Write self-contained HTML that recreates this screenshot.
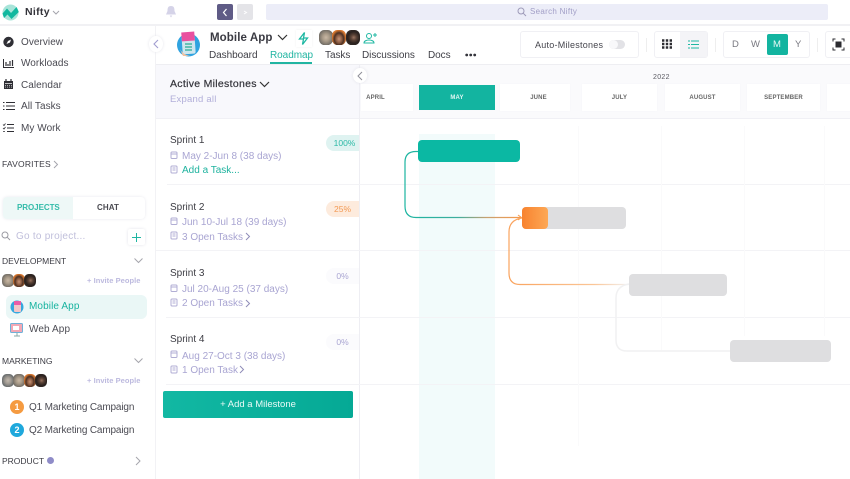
<!DOCTYPE html>
<html><head><meta charset="utf-8"><style>
html,body{margin:0;padding:0;background:#fff}
#p{position:relative;width:850px;height:479px;overflow:hidden;background:#fff;font-family:"Liberation Sans",sans-serif;color:#3c3c44;filter:blur(.35px)}
.a,.t{position:absolute}
.t{white-space:nowrap;line-height:14px}
svg{position:absolute;overflow:visible}
.nav{font-size:10px;color:#4a4a52;letter-spacing:.05px;left:21px}
.sec{font-size:8.5px;left:2px;color:#3c3c44}
.mon{font-size:6px;font-weight:700;color:#666;letter-spacing:.15px;text-align:center}
.cell{position:absolute;top:84px;height:27px;background:#fff;box-shadow:0 0 2px #f6f6f9}
.sp{font-size:10px;left:170px;color:#3d3d44}
.d{font-size:10px;left:182px;color:#a9a5d2}
.pc{font-size:8.5px;text-align:center}
.tab{font-size:10px;top:49px;color:#3f3f46;letter-spacing:-.05px}
.bx{position:absolute;background:#fff;border:1px solid #f0f0f4;border-radius:3px;box-sizing:border-box}
.av{position:absolute;border-radius:38%;box-sizing:border-box}
.f1{background:radial-gradient(ellipse at 50% 50%,#c9b8a4 0,#a89a88 35%,#6f6a63 75%,#8d857c 100%)}
.f2{background:radial-gradient(ellipse at 50% 60%,#c79478 0,#8a5a40 30%,#4a3024 48%,#d9782f 70%)}
.f3{background:radial-gradient(ellipse at 55% 50%,#9a7460 0,#5a4236 25%,#2a211e 55%,#3c3530 100%)}
.f0{background:radial-gradient(ellipse at 50% 50%,#c3b9ae 0,#a09a92 35%,#626769 75%,#9b9fa0 100%)}
.ch{font-size:10px;left:29px;color:#4c4c54;letter-spacing:-.15px}
</style></head><body><div id="p">

<!-- top bar -->
<div class="a" style="left:0;top:24px;width:850px;height:2px;background:#f1f1f4"></div>
<svg style="left:2px;top:4px" width="17" height="17" viewBox="0 0 17 17"><circle cx="8.500" cy="8.500" r="8" fill="#a8e4d9"/><path d="M0.500 9.500 L5 4.500 L9 9 L14.500 3 L16.800 8 L9.500 15 L5.500 10.500 L2 14Z" fill="#10b89f"/></svg>
<div class="t" style="left:25px;top:5px;font-size:10.5px;font-weight:700;color:#33333a;letter-spacing:.3px">Nifty</div>
<svg style="left:52px;top:10px" width="8" height="5"><path d="M1 1 L4 4 L7 1" fill="none" stroke="#a5a5ad" stroke-width="1"/></svg>
<svg style="left:165px;top:5px" width="12" height="13" viewBox="0 0 12 13"><path d="M6 1 C3 1 2.500 3 2.500 6 L1 9.500 H11 L9.500 6 C9.500 3 9 1 6 1Z M4.700 10.500 H7.300 L6 12.500Z" fill="#d5d3e8"/></svg>
<div class="a" style="left:217px;top:4px;width:16px;height:16px;background:#5f5b86;border-radius:2px"></div>
<svg style="left:222px;top:8px" width="6" height="9"><path d="M4.500 1 L1.500 4.500 L4.500 8" fill="none" stroke="#fff" stroke-width="1.200"/></svg>
<div class="a" style="left:237px;top:4px;width:16px;height:16px;background:#e4e4e8;border-radius:2px"></div>
<svg style="left:243px;top:10px" width="5" height="5"><path d="M1 1 L3.500 2.500 L1 4" fill="none" stroke="#fff" stroke-width="1"/></svg>
<div class="a" style="left:266px;top:4px;width:562px;height:16px;background:#ecedf8;border-radius:2px"></div>
<svg style="left:517px;top:7px" width="10" height="10"><circle cx="4" cy="4" r="3" fill="none" stroke="#9d9ab8" stroke-width="1"/><path d="M6.300 6.300 L9 9" stroke="#9d9ab8" stroke-width="1"/></svg>
<div class="t" style="left:530px;top:5px;font-size:8px;color:#a19ec6;letter-spacing:.3px">Search Nifty</div>

<!-- sidebar -->
<div class="a" style="left:155px;top:26px;width:1px;height:453px;background:#f2f2f5"></div>
<svg style="left:3px;top:36px" width="12" height="12"><circle cx="5.500" cy="6" r="5.200" fill="#2f2f35"/><path d="M3.500 8 L5 5 L8 3.500 L7 6.500Z" fill="#fff"/></svg>
<div class="t nav" style="top:36px">Overview</div>
<svg style="left:3px;top:58px" width="12" height="11"><path d="M.5 1 V9.500 H11" fill="none" stroke="#2f2f35" stroke-width="1"/><path d="M3 4 V8 M5 6 V8 M7 3 V8 M9.500 2 V8" stroke="#2f2f35" stroke-width="1.200"/></svg>
<div class="t nav" style="top:57px">Workloads</div>
<svg style="left:4px;top:79px" width="10" height="11"><path d="M0 2 H9 V10 H0Z" fill="#2f2f35"/><path d="M2 0 V3 M7 0 V3" stroke="#2f2f35" stroke-width="1.200"/><path d="M1 4.500 H8" stroke="#fff" stroke-width=".7"/><path d="M1.500 6 V9 M3.500 6 V9 M5.500 6 V9 M7.500 6 V9" stroke="#fff" stroke-width=".6" stroke-dasharray="1 .6"/></svg>
<div class="t nav" style="top:79px">Calendar</div>
<svg style="left:3px;top:101px" width="12" height="10"><path d="M3 1.500 H12 M3 5 H12 M3 8.500 H12" stroke="#2f2f35" stroke-width="1"/><path d="M0 1.500 H1.500 M0 5 H1.500 M0 8.500 H1.500" stroke="#2f2f35" stroke-width="1"/></svg>
<div class="t nav" style="top:100px">All Tasks</div>
<svg style="left:3px;top:123px" width="12" height="10"><path d="M4 1.500 H11 M4 5 H11 M4 8.500 H11" stroke="#2f2f35" stroke-width="1"/><path d="M0 1.500 L1 2.500 L2.500 .5 M0 5 L1 6 L2.500 4 M0 8.500 H2" fill="none" stroke="#2f2f35" stroke-width=".8"/></svg>
<div class="t nav" style="top:122px">My Work</div>
<div class="t sec" style="top:157px;letter-spacing:.2px">FAVORITES</div>
<svg style="left:53px;top:160px" width="6" height="9"><path d="M1 1 L4.500 4.500 L1 8" fill="none" stroke="#a5a5ad" stroke-width="1"/></svg>

<div class="a" style="left:3px;top:197px;width:142px;height:22px;background:#fff;border-radius:4px;box-shadow:0 0 3px #e9e9ef"></div>
<div class="a" style="left:3px;top:197px;width:70px;height:22px;background:#eef8f7;border-radius:4px 0 0 4px"></div>
<div class="t" style="left:17px;top:201px;font-size:8px;font-weight:700;color:#33bba9;letter-spacing:-.05px">PROJECTS</div>
<div class="t" style="left:97px;top:201px;font-size:8px;font-weight:700;color:#4b4b52;letter-spacing:.1px">CHAT</div>
<svg style="left:1px;top:231px" width="10" height="10"><circle cx="4" cy="4" r="3" fill="none" stroke="#9a9aa2" stroke-width="1"/><path d="M6.300 6.300 L9 9" stroke="#9a9aa2" stroke-width="1"/></svg>
<div class="t" style="left:16px;top:230px;font-size:10px;color:#c0bfdb;letter-spacing:.25px">Go to project...</div>
<div class="a" style="left:128px;top:229px;width:17px;height:16px;background:#fff;box-shadow:0 0 3px #e4e4ea;border-radius:2px"></div>
<svg style="left:132px;top:233px" width="9" height="9"><path d="M4.500 0 V9 M0 4.500 H9" stroke="#20b6a2" stroke-width="1"/></svg>

<div class="t sec" style="top:254px">DEVELOPMENT</div>
<svg style="left:134px;top:258px" width="9" height="6"><path d="M.5 .5 L4.500 4.500 L8.500 .5" fill="none" stroke="#a5a5ad" stroke-width="1"/></svg>
<div class="av f1" style="left:2px;top:274px;width:12px;height:13px"></div>
<div class="av f2" style="left:13px;top:274px;width:12px;height:13px"></div>
<div class="av f3" style="left:24px;top:274px;width:12px;height:13px"></div>
<div class="t" style="left:87px;top:274px;font-size:7.500px;font-weight:700;color:#bdbadf;letter-spacing:.05px">+ Invite People</div>
<div class="a" style="left:6px;top:295px;width:141px;height:24px;background:#eaf7f6;border-radius:6px"></div>
<svg style="left:10px;top:300px" width="14" height="14"><circle cx="7" cy="7" r="6.500" fill="#34a8de"/><rect x="4" y="2" width="7" height="10" rx="1" fill="#f4c6c8"/><rect x="4" y="1" width="7" height="4" fill="#e95ca7"/></svg>
<div class="t" style="left:29px;top:300px;font-size:10px;color:#17b39f;letter-spacing:.1px">Mobile App</div>
<svg style="left:10px;top:323px" width="14" height="14"><rect x=".5" y=".5" width="12" height="9" rx="1" fill="#f3a8b5" stroke="#6fb1d8"/><rect x="3" y="3" width="6" height="4" fill="#fff"/><path d="M7 10 V12.500 M4 13 H10" stroke="#8aa" stroke-width="1"/></svg>
<div class="t" style="left:29px;top:323px;font-size:10px;color:#4c4c54;letter-spacing:.1px">Web App</div>

<div class="t sec" style="top:354px">MARKETING</div>
<svg style="left:134px;top:358px" width="9" height="6"><path d="M.5 .5 L4.500 4.500 L8.500 .5" fill="none" stroke="#a5a5ad" stroke-width="1"/></svg>
<div class="av f0" style="left:2px;top:374px;width:12px;height:13px"></div>
<div class="av f1" style="left:13px;top:374px;width:12px;height:13px"></div>
<div class="av f2" style="left:24px;top:374px;width:12px;height:13px"></div>
<div class="av f3" style="left:35px;top:374px;width:12px;height:13px"></div>
<div class="t" style="left:87px;top:374px;font-size:7.500px;font-weight:700;color:#bdbadf;letter-spacing:.05px">+ Invite People</div>
<div class="a" style="left:10px;top:400px;width:14px;height:14px;border-radius:50%;background:#f59b41;color:#fff;font-size:9px;font-weight:700;text-align:center;line-height:14px">1</div>
<div class="t ch" style="top:400px;margin-top:1px">Q1 Marketing Campaign</div>
<div class="a" style="left:10px;top:423px;width:14px;height:14px;border-radius:50%;background:#1fa8dc;color:#fff;font-size:9px;font-weight:700;text-align:center;line-height:14px">2</div>
<div class="t ch" style="top:423px;margin-top:1px">Q2 Marketing Campaign</div>
<div class="t sec" style="top:454px">PRODUCT</div>
<div class="a" style="left:47px;top:457px;width:7px;height:7px;border-radius:50%;background:#8f8cc8"></div>
<svg style="left:135px;top:456px" width="6" height="10"><path d="M1 1 L5 5 L1 9" fill="none" stroke="#a5a5ad" stroke-width="1"/></svg>

<!-- project header -->
<div class="a" style="left:156px;top:64px;width:694px;height:1px;background:#eeeef2"></div>
<div class="a" style="left:149px;top:36px;width:14px;height:16px;background:#fff;border-radius:50%;box-shadow:0 0 3px #e6e6ec"></div>
<svg style="left:153px;top:39px" width="6" height="10"><path d="M5 1 L1 5 L5 9" fill="none" stroke="#a19ed0" stroke-width="1.100"/></svg>
<svg style="left:177px;top:31px" width="24" height="26"><circle cx="11.500" cy="14" r="11.500" fill="#2fa3e0"/><rect x="5" y="2" width="13" height="21" rx="2" fill="#cfe6ee" transform="rotate(-4 11 12)"/><rect x="5" y="1" width="13" height="9" fill="#e9509f" transform="rotate(-4 11 12)"/><path d="M8 13 H15 M8 16 H15 M8 19 H15" stroke="#46b5a3" stroke-width="1.500"/><path d="M3 18 Q6 24 13 25 L6 25Z" fill="#f4c09c"/></svg>
<div class="t" style="left:210px;top:31px;font-size:11.500px;font-weight:700;color:#3a3a42;letter-spacing:.1px">Mobile App</div>
<svg style="left:277px;top:34px" width="11" height="7"><path d="M1 1 L5.500 5.500 L10 1" fill="none" stroke="#333" stroke-width="1.200"/></svg>
<div class="a" style="left:296px;top:30px;width:16px;height:17px;background:#fff;box-shadow:0 0 2px #eee"></div>
<svg style="left:298px;top:32px" width="11" height="13"><path d="M6.500 .5 L1.500 7 H5.500 L4.500 12.500 L9.500 6 H5.500Z" fill="none" stroke="#1fb8a3" stroke-width="1.300"/></svg>
<div class="av f1" style="left:319px;top:30px;width:14px;height:15px"></div>
<div class="av f2" style="left:332px;top:30px;width:14px;height:15px"></div>
<div class="av f3" style="left:346px;top:30px;width:14px;height:15px"></div>
<svg style="left:363px;top:32px" width="14" height="12"><circle cx="6" cy="4" r="2.500" fill="none" stroke="#1fb8a3" stroke-width="1"/><path d="M1 11 C1 7 11 7 11 11Z" fill="none" stroke="#1fb8a3" stroke-width="1"/><path d="M10 3 H14 M12 1 V5" stroke="#1fb8a3" stroke-width="1"/></svg>
<div class="t tab" style="left:209px">Dashboard</div>
<div class="t tab" style="left:270px;color:#22b5a2">Roadmap</div>
<div class="a" style="left:270px;top:62px;width:42px;height:2px;background:#22b5a2"></div>
<div class="t tab" style="left:325px">Tasks</div>
<div class="t tab" style="left:362px">Discussions</div>
<div class="t tab" style="left:428px">Docs</div>
<svg style="left:465px;top:53px" width="12" height="4"><circle cx="1.700" cy="2" r="1.400" fill="#33333a"/><circle cx="5.700" cy="2" r="1.400" fill="#33333a"/><circle cx="9.700" cy="2" r="1.400" fill="#33333a"/></svg>

<div class="bx" style="left:520px;top:31px;width:119px;height:27px"></div>
<div class="t" style="left:535px;top:38px;font-size:9px;color:#45454d;letter-spacing:.25px">Auto-Milestones</div>
<div class="a" style="left:609px;top:40px;width:16px;height:9px;border-radius:5px;background:#e2e2e6"></div>
<div class="a" style="left:609px;top:40px;width:9px;height:9px;border-radius:50%;background:#f8f8fa"></div>
<div class="a" style="left:646px;top:38px;width:1px;height:14px;background:#eee"></div>
<div class="bx" style="left:654px;top:31px;width:54px;height:27px"></div>
<div class="a" style="left:680px;top:32px;width:27px;height:25px;background:#f4f4f7"></div>
<svg style="left:662px;top:39px" width="10" height="10"><path d="M0 1.500 H10 M0 5 H10 M0 8.500 H10" stroke="#2b2b30" stroke-width="2.400" stroke-dasharray="2.400 1.400"/></svg>
<svg style="left:688px;top:40px" width="11" height="9"><path d="M3 1 H11 M3 4.500 H11 M3 8 H11" stroke="#1fb8a3" stroke-width="1.100"/><path d="M0 1 H2 M0 4.500 H2 M0 8 H2" stroke="#1fb8a3" stroke-width="1.100"/></svg>
<div class="a" style="left:715px;top:38px;width:1px;height:14px;background:#eee"></div>
<div class="bx" style="left:723px;top:31px;width:87px;height:27px"></div>
<div class="a" style="left:767px;top:34px;width:21px;height:21px;background:#13b4a0;border-radius:2px"></div>
<div class="t" style="left:732px;top:38px;font-size:9.500px;color:#77777f">D</div>
<div class="t" style="left:751px;top:38px;font-size:9.500px;color:#77777f">W</div>
<div class="t" style="left:773px;top:38px;font-size:9.500px;color:#e8f8f5">M</div>
<div class="t" style="left:795px;top:38px;font-size:9.500px;color:#77777f">Y</div>
<div class="a" style="left:817px;top:38px;width:1px;height:14px;background:#eee"></div>
<div class="bx" style="left:825px;top:31px;width:30px;height:27px"></div>
<svg style="left:833px;top:39px" width="11" height="11"><rect x="2.500" y="2.500" width="6" height="6" fill="#2b2b30"/><path d="M0 2.500 V0 H2.500 M8.500 0 H11 V2.500 M11 8.500 V11 H8.500 M2.500 11 H0 V8.500" fill="none" stroke="#2b2b30" stroke-width="1"/></svg>

<!-- left panel -->
<div class="a" style="left:156px;top:65px;width:204px;height:53px;background:#f8f8fc"></div>
<div class="a" style="left:360px;top:65px;width:490px;height:53px;background:#fafafc"></div>
<div class="a" style="left:156px;top:118px;width:694px;height:1px;background:#f0f0f5"></div>
<div class="a" style="left:359px;top:65px;width:1px;height:414px;background:#eeeef3"></div>
<div class="t" style="left:170px;top:77px;font-size:10.500px;color:#33333a;letter-spacing:.3px;-webkit-text-stroke:.2px #33333a">Active Milestones</div>
<svg style="left:259px;top:81px" width="11" height="7"><path d="M1 1 L5.500 5.500 L10 1" fill="none" stroke="#333" stroke-width="1.200"/></svg>
<div class="t" style="left:170px;top:93px;font-size:9.500px;color:#b2afd9;letter-spacing:.22px">Expand all</div>
<div class="a" style="left:353px;top:68px;width:14px;height:15px;background:#fff;border-radius:50%;box-shadow:0 0 3px #e3e3ea"></div>
<svg style="left:357px;top:71px" width="6" height="10"><path d="M5 1 L1 5 L5 9" fill="none" stroke="#8f8f98" stroke-width="1"/></svg>

<!-- timeline header -->
<div class="t" style="left:653px;top:71px;font-size:7px;color:#5a5a62;letter-spacing:.3px">2022</div>
<div class="cell" style="left:361px;width:52px"></div>
<div class="a" style="left:419px;top:85px;width:76px;height:25px;background:#13b4a0"></div>
<div class="cell" style="left:500px;width:70px"></div>
<div class="cell" style="left:582px;width:75px"></div>
<div class="cell" style="left:665px;width:75px"></div>
<div class="cell" style="left:747px;width:73px"></div>
<div class="cell" style="left:827px;width:30px"></div>
<div class="t mon" style="left:361px;top:91px;width:29px">APRIL</div>
<div class="t mon" style="left:419px;top:91px;width:76px;color:#e2f7f3">MAY</div>
<div class="t mon" style="left:500px;top:91px;width:77px">JUNE</div>
<div class="t mon" style="left:582px;top:91px;width:75px">JULY</div>
<div class="t mon" style="left:665px;top:91px;width:75px">AUGUST</div>
<div class="t mon" style="left:747px;top:91px;width:73px">SEPTEMBER</div>

<!-- grid -->
<div class="a" style="left:419px;top:134px;width:76px;height:345px;background:#f2fbfb"></div>
<div class="a" style="left:167px;top:184px;width:683px;height:1px;background:#f3f3f6"></div>
<div class="a" style="left:156px;top:250px;width:694px;height:1px;background:#f3f3f6"></div>
<div class="a" style="left:166px;top:317px;width:684px;height:1px;background:#f3f3f6"></div>
<div class="a" style="left:166px;top:384px;width:684px;height:1px;background:#f3f3f6"></div>
<div class="a" style="left:578px;top:126px;width:1px;height:320px;background:#fafafb"></div>
<div class="a" style="left:661px;top:126px;width:1px;height:225px;background:#fafafb"></div>
<div class="a" style="left:744px;top:126px;width:1px;height:210px;background:#fafafb"></div>
<div class="a" style="left:824px;top:126px;width:1px;height:210px;background:#fafafb"></div>

<!-- rows -->
<div class="t sp" style="top:134px">Sprint 1</div>
<div class="a" style="left:326px;top:135px;width:33px;height:16px;border-radius:8px 0 0 8px;background:#dff3f1"></div>
<div class="t pc" style="left:326px;top:136px;width:37px;color:#2cb9a6">100%</div>
<div class="t d" style="top:150px">May 2-Jun 8 (38 days)</div>
<div class="t d" style="top:164px;color:#1fb39f">Add a Task...</div>

<div class="t sp" style="top:200px;margin-top:1px">Sprint 2</div>
<div class="a" style="left:326px;top:201px;width:33px;height:16px;border-radius:8px 0 0 8px;background:#fdebdd"></div>
<div class="t pc" style="left:326px;top:202px;width:33px;color:#f39a55">25%</div>
<div class="t d" style="top:216px">Jun 10-Jul 18 (39 days)</div>
<div class="t d" style="top:231px">3 Open Tasks</div>

<div class="t sp" style="top:267px">Sprint 3</div>
<div class="a" style="left:326px;top:268px;width:33px;height:16px;border-radius:8px 0 0 8px;background:#fbfbfd"></div>
<div class="t pc" style="left:326px;top:269px;width:33px;color:#a9a5d2">0%</div>
<div class="t d" style="top:283px">Jul 20-Aug 25 (37 days)</div>
<div class="t d" style="top:297px">2 Open Tasks</div>

<div class="t sp" style="top:333px">Sprint 4</div>
<div class="a" style="left:326px;top:334px;width:33px;height:16px;border-radius:8px 0 0 8px;background:#fbfbfd"></div>
<div class="t pc" style="left:326px;top:335px;width:33px;color:#a9a5d2">0%</div>
<div class="t d" style="top:350px">Aug 27-Oct 3 (38 days)</div>
<div class="t d" style="top:364px">1 Open Task</div>

<svg style="left:167px;top:150px" width="80" height="230" fill="none" stroke="#b1aed4" stroke-width="1">
<rect x="4" y="2" width="6" height="6.500" rx="1"/><path d="M4 4 H10"/>
<rect x="4" y="16" width="6" height="7" rx="1"/><path d="M5.500 18 H8.500 M5.500 20 H8.500"/>
<rect x="4" y="68" width="6" height="6.500" rx="1"/><path d="M4 70 H10"/>
<rect x="4" y="82" width="6" height="7" rx="1"/><path d="M5.500 84 H8.500 M5.500 86 H8.500"/>
<rect x="4" y="135" width="6" height="6.500" rx="1"/><path d="M4 137 H10"/>
<rect x="4" y="149" width="6" height="7" rx="1"/><path d="M5.500 151 H8.500 M5.500 153 H8.500"/>
<rect x="4" y="201" width="6" height="6.500" rx="1"/><path d="M4 203 H10"/>
<rect x="4" y="216" width="6" height="7" rx="1"/><path d="M5.500 218 H8.500 M5.500 220 H8.500"/>
</svg>
<svg style="left:245px;top:232px" width="6" height="10"><path d="M1 1 L4.500 4.500 L1 8" fill="none" stroke="#8f8cb8" stroke-width="1"/></svg>
<svg style="left:245px;top:299px" width="6" height="10"><path d="M1 1 L4.500 4.500 L1 8" fill="none" stroke="#8f8cb8" stroke-width="1"/></svg>
<svg style="left:239px;top:365px" width="6" height="10"><path d="M1 1 L4.500 4.500 L1 8" fill="none" stroke="#8f8cb8" stroke-width="1"/></svg>

<div class="a" style="left:163px;top:391px;width:190px;height:27px;background:linear-gradient(90deg,#12b8a3,#05a995);border-radius:2px;color:#eafaf7;font-size:9.500px;text-align:center;line-height:28px">+ Add a Milestone</div>

<!-- connectors -->
<svg style="left:0;top:0" width="850" height="479" fill="none">
<defs><linearGradient id="g" gradientUnits="userSpaceOnUse" x1="405" y1="0" x2="522" y2="0"><stop offset="0" stop-color="#1bb5a1"/><stop offset=".45" stop-color="#3fae9e"/><stop offset=".7" stop-color="#c9a070"/><stop offset="1" stop-color="#f89a4a"/></linearGradient>
<linearGradient id="o" gradientUnits="userSpaceOnUse" x1="510" y1="0" x2="629" y2="0"><stop offset="0" stop-color="#f9a35e"/><stop offset=".7" stop-color="#fbc596"/><stop offset="1" stop-color="#f2f2f2"/></linearGradient></defs>
<path d="M419 151.500 H416 Q405 151.500 405 162 V206 Q405 217.500 416 217.500 H521" stroke="url(#g)" stroke-width="1.200"/>
<path d="M518 215 L521.500 217.500 L518 220" stroke="#f89a4a" stroke-width="1"/>
<path d="M522 218 Q509 220 509 232 V273 Q509 284.500 520 284.500 H629" stroke="url(#o)" stroke-width="1.200"/>
<path d="M629 284 Q616 286 616 298 V340 Q616 351 627 351 H730" stroke="#f1f1f2" stroke-width="1.500"/>
</svg>

<!-- bars -->
<div class="a" style="left:418px;top:140px;width:102px;height:22px;background:#0bb8a3;border-radius:4px"></div>
<div class="a" style="left:522px;top:207px;width:104px;height:22px;background:#dedee0;border-radius:4px"></div>
<div class="a" style="left:522px;top:207px;width:26px;height:22px;background:linear-gradient(90deg,#f8832f,#fda855);border-radius:4px"></div>
<div class="a" style="left:629px;top:274px;width:98px;height:21.500px;background:#dedee0;border-radius:4px"></div>
<div class="a" style="left:730px;top:340px;width:101px;height:22px;background:#dedee0;border-radius:4px"></div>

</div></body></html>
